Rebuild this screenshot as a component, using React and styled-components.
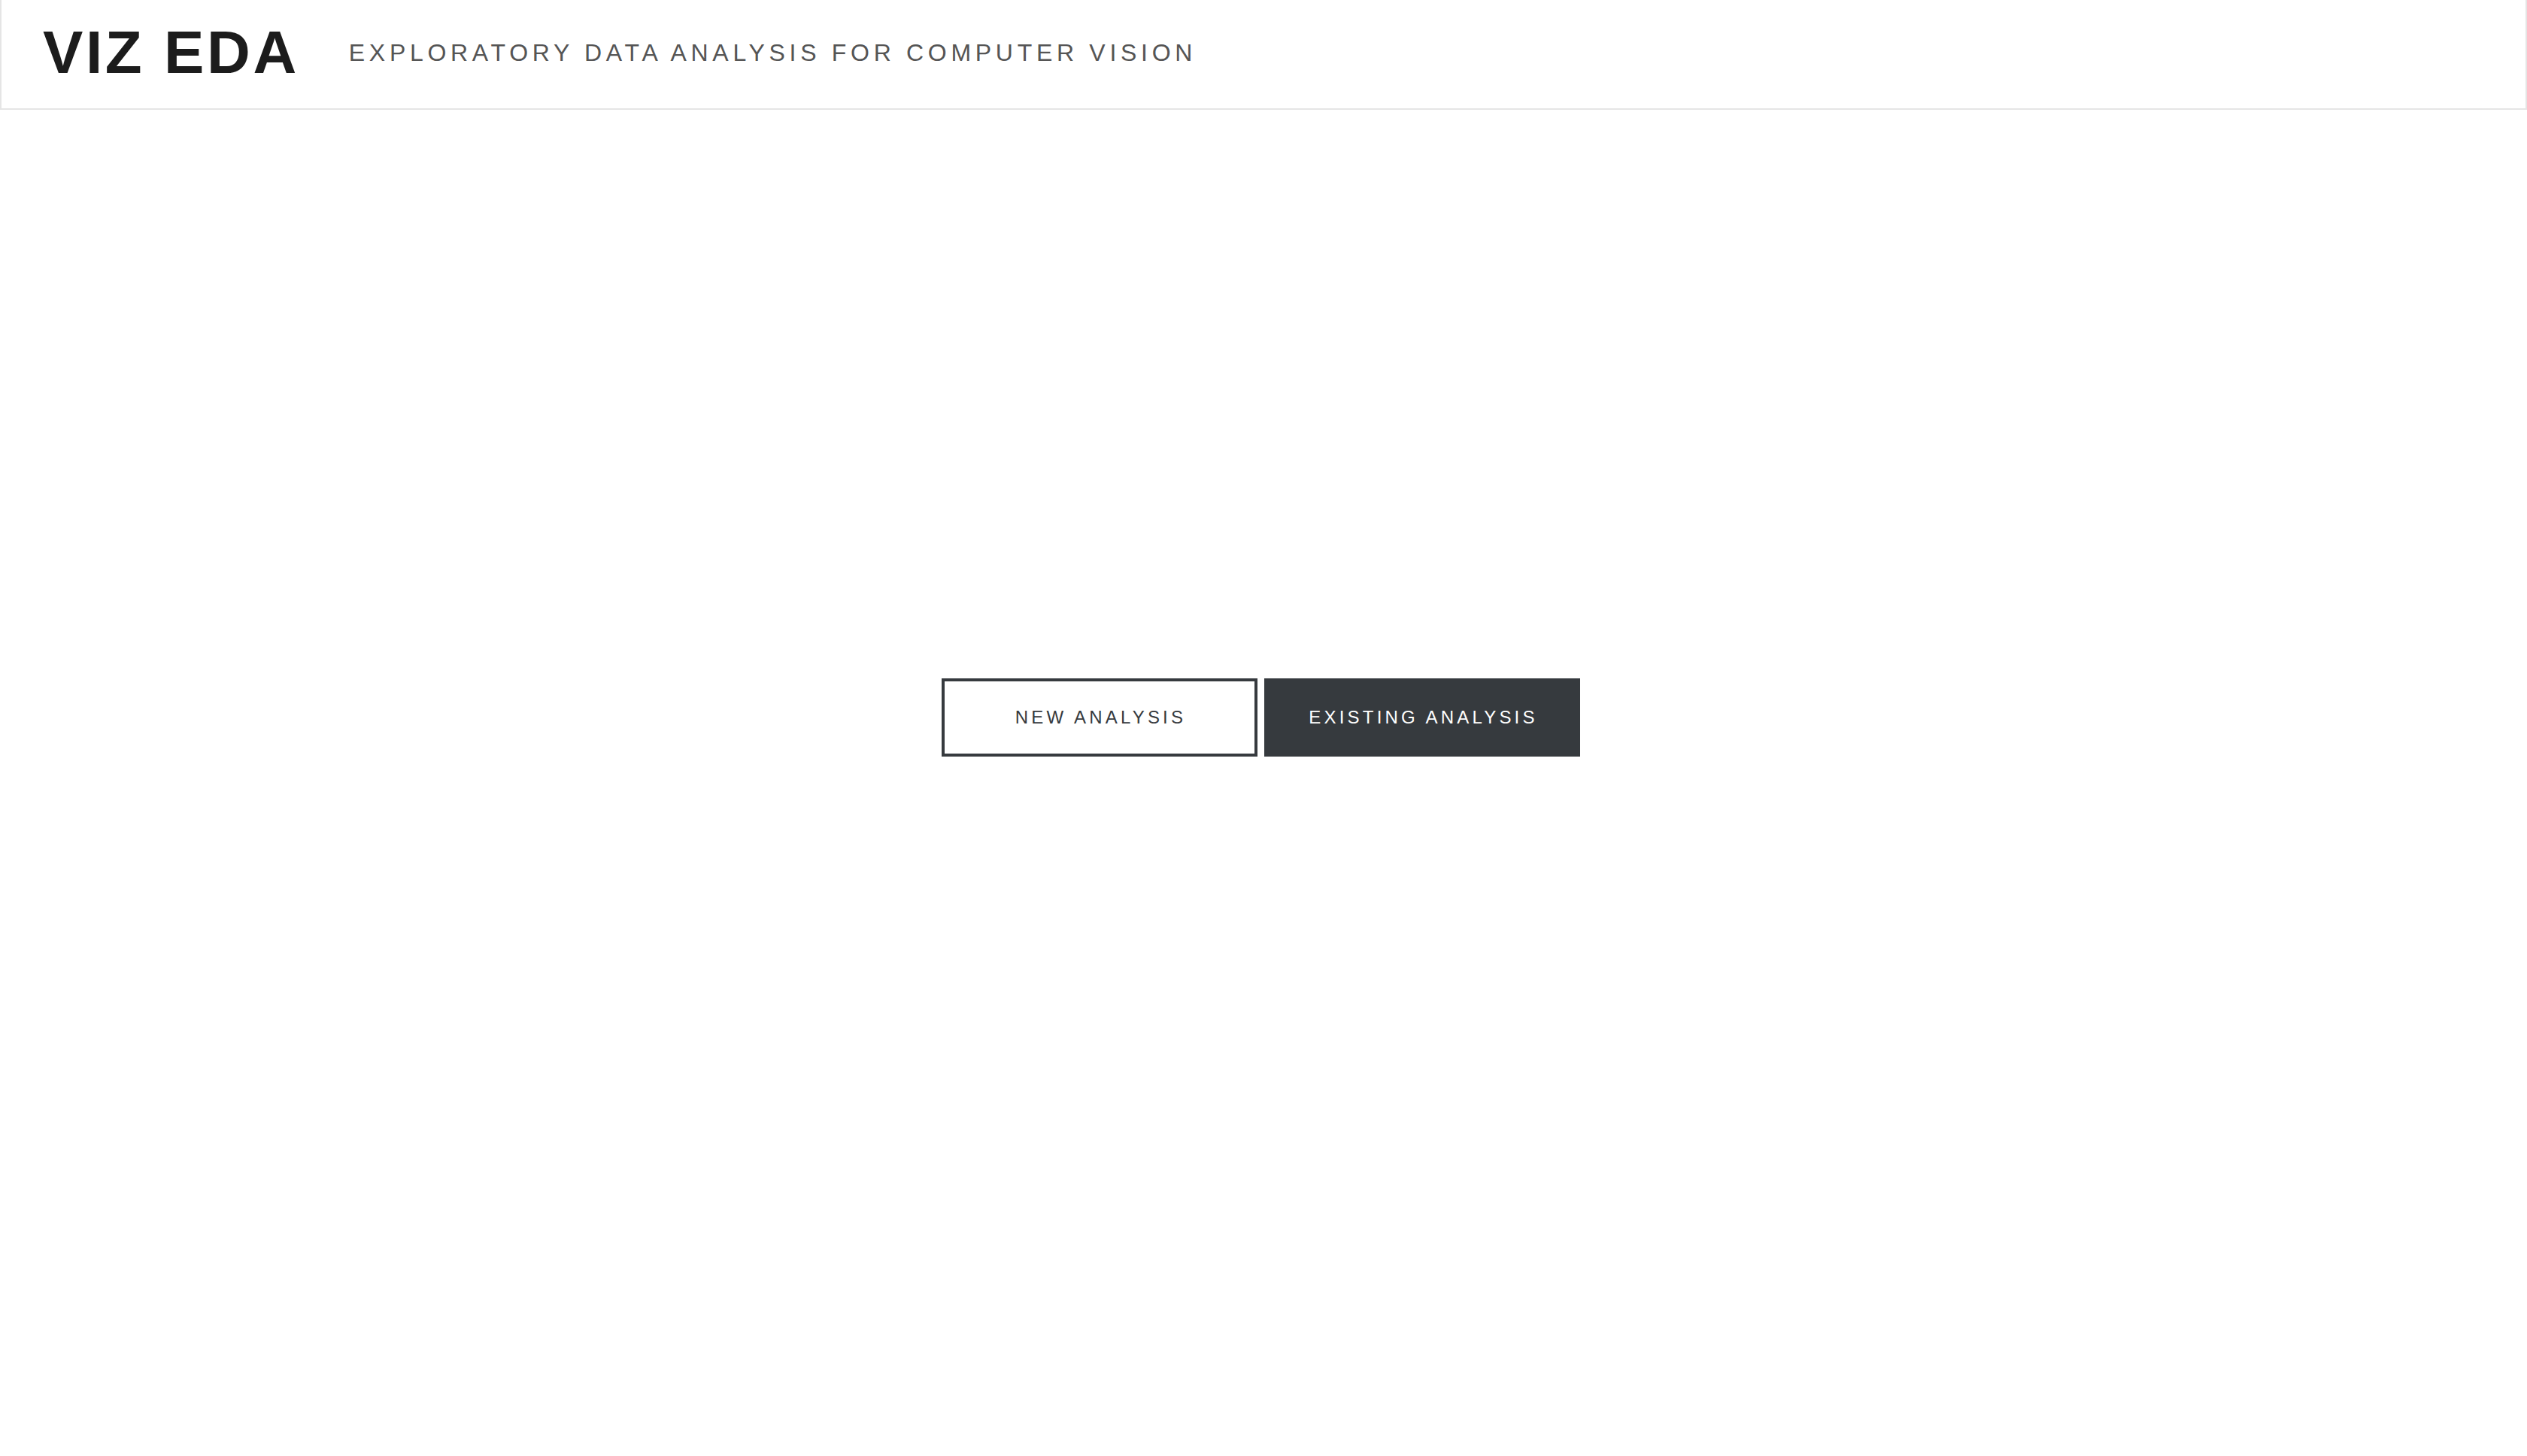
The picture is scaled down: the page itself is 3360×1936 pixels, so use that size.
import React from "react";
import styled, { createGlobalStyle } from "styled-components";

const GlobalStyle = createGlobalStyle`
  html, body {
    margin: 0;
    padding: 0;
    background: #ffffff;
    font-family: "Liberation Sans", Arial, sans-serif;
  }
`;

const Page = styled.div`
  width: 100%;
  min-height: 100vh;
  display: flex;
  flex-direction: column;
`;

const Header = styled.header`
  height: 146px;
  display: flex;
  align-items: center;
  padding: 0 0 4px 55px;
  box-sizing: border-box;
  border: 2px solid #e5e5e5;
  border-top: none;
`;

const Logo = styled.h1`
  margin: 0 66px 0 0;
  font-size: 80px;
  font-weight: 700;
  letter-spacing: 3.6px;
  color: #1c1c1c;
  line-height: 1;
`;

const Tagline = styled.span`
  font-size: 32px;
  letter-spacing: 5.7px;
  color: #555555;
  text-transform: uppercase;
  line-height: 1;
`;

const Main = styled.main`
  flex: 1;
  display: flex;
  justify-content: center;
  align-items: flex-start;
  padding: 756px 8px 0 0;
  gap: 9px;
`;

const Button = styled.button`
  width: 420px;
  height: 104px;
  box-sizing: border-box;
  border: 4px solid #363a3e;
  background: ${(props) => (props.$dark ? "#363a3e" : "#ffffff")};
  color: ${(props) => (props.$dark ? "#ffffff" : "#363a3e")};
  font-family: "Liberation Sans", Arial, sans-serif;
  font-size: 24px;
  letter-spacing: 4.2px;
  text-transform: uppercase;
  cursor: pointer;
  padding: 0 0 0 4px;
`;

const App = () => {
  return (
    <Page>
      <GlobalStyle />
      <Header>
        <Logo>VIZ EDA</Logo>
        <Tagline>Exploratory Data Analysis for Computer Vision</Tagline>
      </Header>
      <Main>
        <Button>New Analysis</Button>
        <Button $dark>Existing Analysis</Button>
      </Main>
    </Page>
  );
};

export default App;
